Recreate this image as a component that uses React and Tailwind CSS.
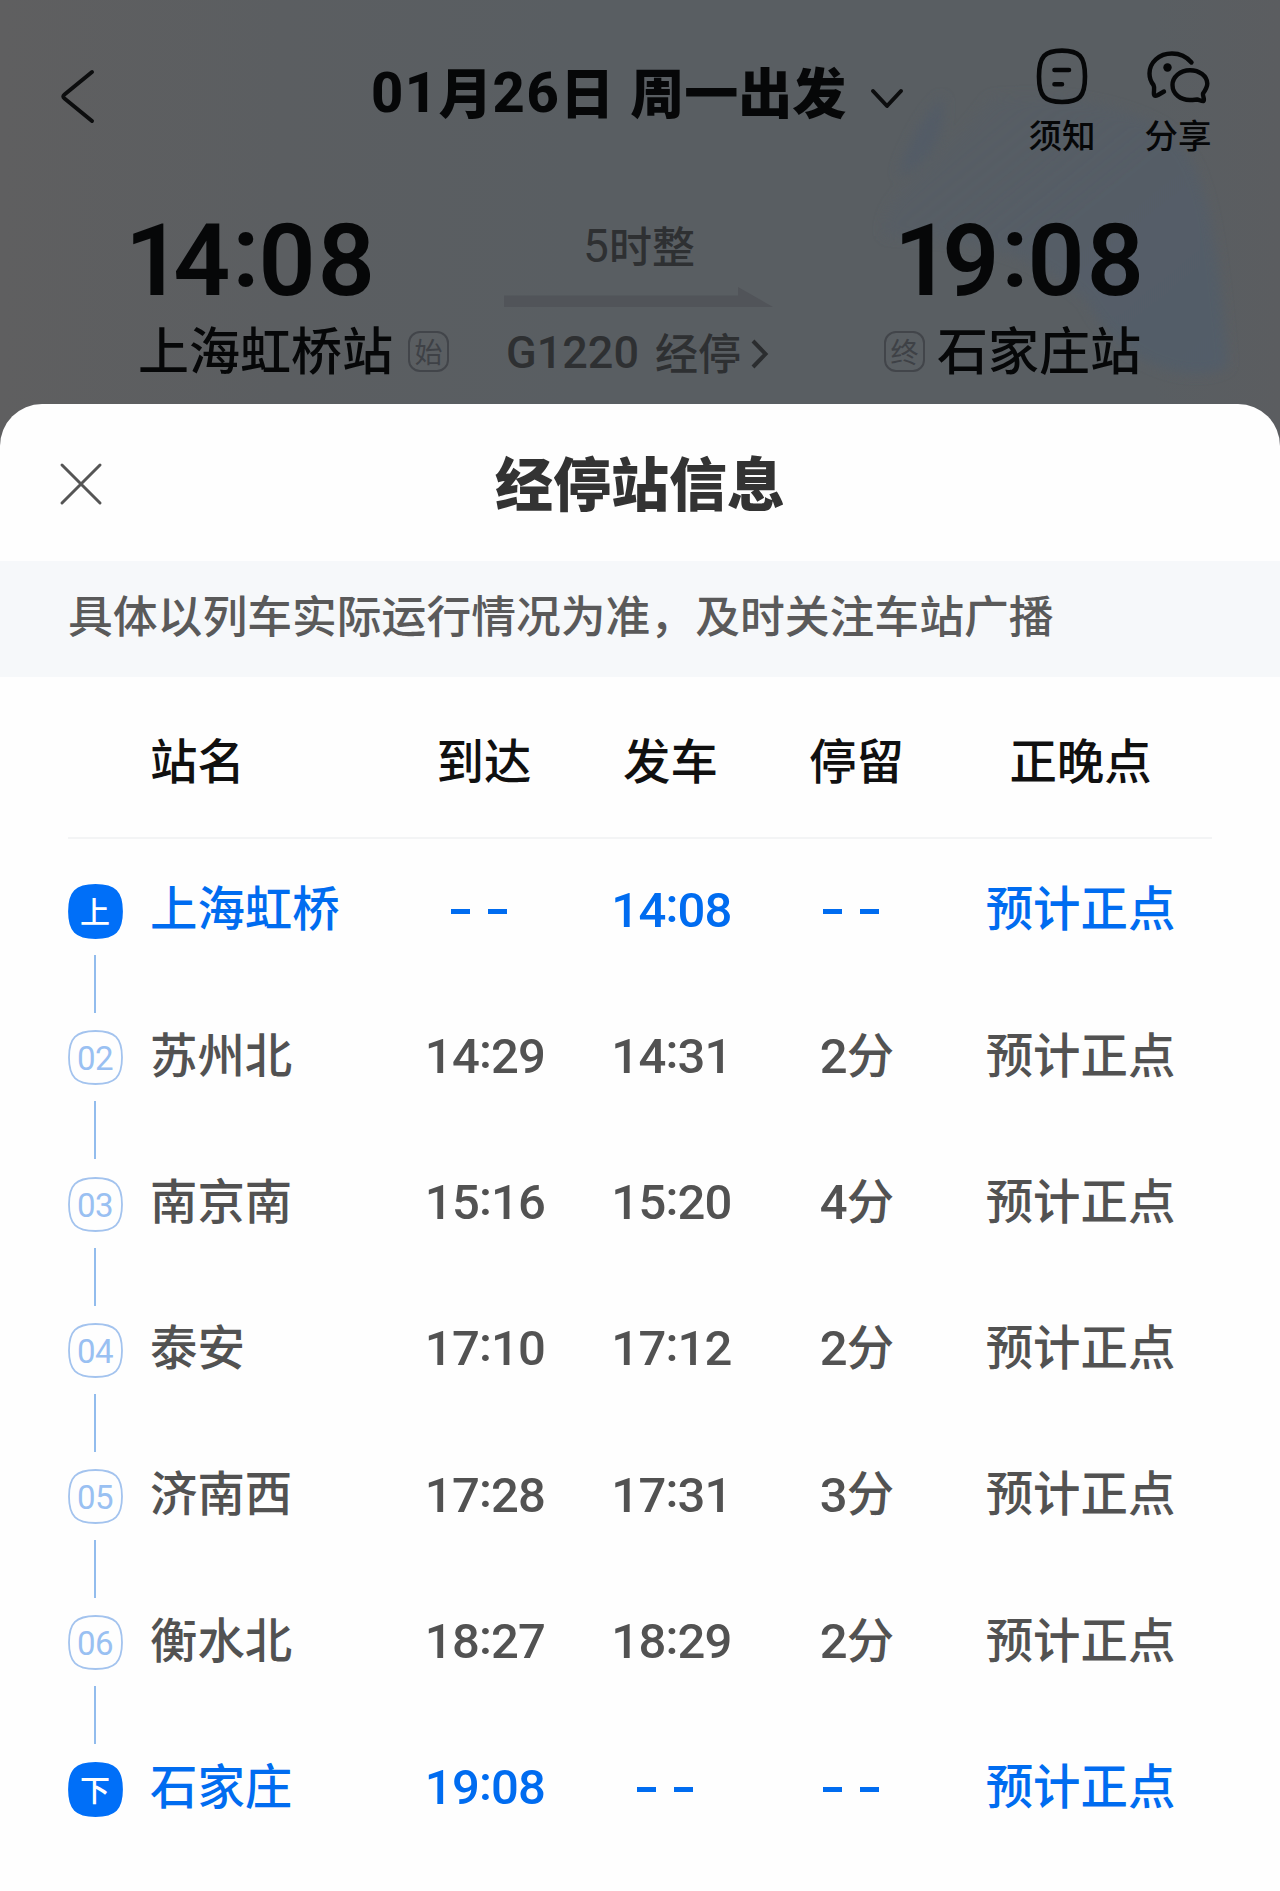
const stops = [
  { no: '上', name: '上海虹桥', arrive: null, depart: '14:08', stay: null, active: true },
  { no: '02', name: '苏州北', arrive: '14:29', depart: '14:31', stay: '2分' },
  { no: '03', name: '南京南', arrive: '15:16', depart: '15:20', stay: '4分' },
  { no: '04', name: '泰安', arrive: '17:10', depart: '17:12', stay: '2分' },
  { no: '05', name: '济南西', arrive: '17:28', depart: '17:31', stay: '3分' },
  { no: '06', name: '衡水北', arrive: '18:27', depart: '18:29', stay: '2分' },
  { no: '下', name: '石家庄', arrive: '19:08', depart: null, stay: null, active: true },
]

const COLS = 'grid grid-cols-[82px_241px_186px_187px_185px_263px]'
const DIGITS = "font-['Roboto','Noto_Sans_CJK_SC',sans-serif]"

function Backdrop() {
  return (
    <svg className="absolute inset-0 h-full w-full" viewBox="0 0 1280 450" preserveAspectRatio="none">
      <defs>
        <linearGradient id="sky" x1="0" y1="0" x2="1" y2="0">
          <stop offset="0" stopColor="#5f5f60" />
          <stop offset="0.22" stopColor="#5b5e61" />
          <stop offset="0.45" stopColor="#595e62" />
          <stop offset="0.9" stopColor="#595e62" />
          <stop offset="1" stopColor="#5b5d60" />
        </linearGradient>
        <linearGradient id="train" x1="0" y1="0" x2="1" y2="1">
          <stop offset="0" stopColor="#565d65" stopOpacity="0.3" />
          <stop offset="0.5" stopColor="#555d66" />
          <stop offset="1" stopColor="#525d69" />
        </linearGradient>
        <filter id="soft">
          <feGaussianBlur stdDeviation="6" />
        </filter>
      </defs>
      <rect width="1280" height="450" fill="url(#sky)" />
      <g filter="url(#soft)">
        <path d="M990 98 C1060 92 1120 104 1160 126 C1210 156 1216 240 1228 366 C1196 386 1120 368 1086 300 C1030 250 980 240 884 236 C880 190 930 180 990 98Z" fill="url(#train)" />
        <path d="M943 96 C946 130 936 164 898 176 C904 150 924 112 943 96Z" fill="#525c66" />
      </g>
    </svg>
  )
}

function NoticeIcon() {
  return (
    <svg width="52" height="57" viewBox="0 0 52 57" fill="none" stroke="#060708" strokeWidth="4.6" strokeLinecap="round">
      <path d="M26 2.6 C43 2.6 49 8 49 28.500 C49 49 43 54 26 54 C9 54 3 49 3 28.500 C3 8 9 2.600 26 2.600Z" />
      <path d="M18.500 22H33M18.500 36.200H26" />
    </svg>
  )
}

function ShareIcon() {
  return (
    <svg width="63" height="54" viewBox="0 0 63 54" fill="none" stroke="#060708" strokeWidth="4.4" strokeLinecap="round" strokeLinejoin="round">
      <path d="M44.500 11.500 C39 5 33 2.500 25 2.500 C12 2.500 2.500 11.500 2.500 22.500 C2.500 27 4 31 6.500 34 C8 37 6.500 40 7 43.500 C7.500 45.500 9 45 11 44 L17 40.500" />
      <circle cx="20.500" cy="16.500" r="4.200" fill="#060708" stroke="none" />
      <path d="M56 42.500 C58.500 39 60.300 36 60.300 32.500 C60 25 52.500 19.200 43 19.200 C33 19.200 25.500 26 25.500 34 C25.500 43 33.500 49.500 44 49 C46.500 49 48.500 48.500 50 48.500 C52.500 49 54.500 50.300 56.500 50 C58 48.500 55.500 45.500 56 42.500Z" />
    </svg>
  )
}

function TerminalTag({ children }) {
  return (
    <span className="flex h-[41px] w-[41px] items-center justify-center rounded-[12px] border-2 border-[#42454a] pb-[1px] text-[28px] leading-none font-normal text-[#3e4146]">
      {children}
    </span>
  )
}

function StopBadge({ no, active }) {
  return (
    <div className="relative flex h-[55px] w-[55px] items-center justify-center">
      <svg className="absolute inset-0" width="55" height="55" viewBox="0 0 55 55">
        <path
          d="M27.500 1 C47 1 54 8 54 27.500 C54 47 47 54 27.500 54 C8 54 1 47 1 27.500 C1 8 8 1 27.500 1Z"
          fill={active ? '#006ff8' : 'none'}
          stroke={active ? '#006ff8' : '#a3c3ee'}
          strokeWidth="1.800"
        />
      </svg>
      {active ? (
        <span className="relative pb-[3px] text-[30px] leading-none font-medium text-white">{no}</span>
      ) : (
        <span className={`${DIGITS} relative pt-[2px] text-[33px] leading-none tracking-[-0.500px] text-[#99c0f2]`}>{no}</span>
      )}
    </div>
  )
}

// colon is lifted so it sits at the middle of the digits
function Clock({ value }) {
  const [h, m] = value.split(':')
  return (
    <>
      {h}
      <span className="relative -top-[0.09em]">:</span>
      {m}
    </>
  )
}

function BigClock({ value }) {
  return (
    <div className={`${DIGITS} h-[108px] pt-[11px] text-[100px] leading-none font-semibold tracking-[2px]`}>
      <span className="tracking-[-9px]">{value[0]}</span>
      {value[1]}
      <span className="relative -top-[0.09em] tracking-[-1px]">:</span>
      {value.slice(3)}
    </div>
  )
}

function Time({ value }) {
  if (!value) {
    return (
      <span className="flex gap-[18px] pt-[6px] pr-[13px]">
        <i className="h-[5px] w-[19px] bg-current" />
        <i className="h-[5px] w-[19px] bg-current" />
      </span>
    )
  }
  return (
    <span className={`${DIGITS} pt-[3px] text-[49px] leading-none font-medium tracking-[-0.800px]`}>
      {value.includes(':') ? <Clock value={value} /> : value}
    </span>
  )
}

function StopRow({ stop, last }) {
  return (
    <div className={`${COLS} h-[146.300px] ${stop.active ? 'text-[#006cf0]' : 'text-[#525252]'}`}>
      <div className="flex w-[54px] flex-col items-center">
        <StopBadge no={stop.no} active={stop.active} />
        {!last && <div className="mt-[16px] h-[58px] w-[2px] bg-[#92bced]" />}
      </div>
      <div className="flex h-[49px] items-center pb-[5px] text-[47.400px] leading-none font-medium">{stop.name}</div>
      <div className="flex h-[49px] items-center justify-center pl-[2px]">
        <Time value={stop.arrive} />
      </div>
      <div className="flex h-[49px] items-center justify-center pl-[2px]">
        <Time value={stop.depart} />
      </div>
      <div className="flex h-[49px] items-center justify-center pl-[1px]">
        {stop.stay ? (
          <span className="flex items-center">
            <Time value={stop.stay[0]} />
            <span className="pb-[5px] text-[47.400px] leading-none font-medium">分</span>
          </span>
        ) : (
          <Time />
        )}
      </div>
      <div className="flex h-[49px] items-center justify-center pb-[5px] text-[47.400px] leading-none font-medium">预计正点</div>
    </div>
  )
}

export default function App() {
  return (
    <div className="relative h-[1891px] w-[1280px] overflow-hidden bg-[#5b5e61] font-['Noto_Sans_CJK_SC',sans-serif] whitespace-nowrap">
      <div className="relative h-[404px]">
        <div className="absolute inset-x-0 top-0 h-[450px]">
          <Backdrop />
        </div>

        {/* nav bar */}
        <div className="relative flex h-[200px] pt-[46px]">
          <svg className="mt-[22px] ml-[59px]" width="36" height="58" viewBox="0 0 36 58" fill="none" stroke="#0c0d0e" strokeWidth="4" strokeLinecap="round" strokeLinejoin="round">
            <path d="M33 4 L5.500 26.500 Q3 28.500 5.500 30.500 L33 53" />
          </svg>
          <div className="ml-[276px] flex h-[90px] w-[474px] items-center text-[54px] leading-none font-black text-[#060708]">
            <span className={`${DIGITS} pt-[3px] text-[56px] font-extrabold tracking-[1.500px]`}>01</span>月
            <span className={`${DIGITS} pt-[3px] text-[56px] font-extrabold tracking-[1.500px]`}>26</span>日
            <span className="ml-[16px]">周一出发</span>
          </div>
          <svg className="mt-[41px] ml-[24px]" width="36" height="24" viewBox="0 0 36 24" fill="none" stroke="#0c0d0e" strokeWidth="4" strokeLinecap="round" strokeLinejoin="round">
            <path d="M4 4 L18 19 L32 4" />
          </svg>
          <div className="ml-[123px] flex w-[68px] flex-col items-center pt-[2px] text-[33.500px] leading-none font-medium text-[#060708]">
            <NoticeIcon />
            <span className="mt-[12px]">须知</span>
          </div>
          <div className="ml-[48px] flex w-[68px] flex-col items-center pt-[2px] text-[33.500px] leading-none font-medium text-[#060708]">
            <div className="pt-[3px]">
              <ShareIcon />
            </div>
            <span className="mt-[12px]">分享</span>
          </div>
        </div>

        {/* trip summary */}
        <div className="relative flex text-[#060708]">
          <div className="ml-[125px] w-[325px]">
            <BigClock value="14:08" />
            <div className="mt-[15px] flex items-center pl-[13px]">
              <span className="text-[51px] leading-none font-medium">上海虹桥站</span>
              <span className="ml-[15px] pt-[6px]">
                <TerminalTag>始</TerminalTag>
              </span>
            </div>
          </div>
          <div className="ml-[54px] w-[270px] text-[#2e3032]">
            <div className="flex items-center justify-center pt-[20px] text-[43px] leading-none font-medium">
              <span className={`${DIGITS} pt-[3px] text-[46px] font-normal`}>5</span>时整
            </div>
            <svg className="mt-[17px]" width="270" height="22" viewBox="0 0 270 22">
              <path d="M0 9.500H234V1L269 21H0Z" fill="#515459" />
            </svg>
            <div className="mt-[20px] flex items-center pl-[2px] text-[43px] leading-none font-medium">
              <span className={`${DIGITS} pt-[2px] text-[45px] font-medium`}>G1220</span>
              <span className="ml-[16px]">经停</span>
              <svg className="mt-[4px] ml-[10px]" width="18" height="32" viewBox="0 0 18 32" fill="none" stroke="#2b2d2f" strokeWidth="4">
                <path d="M2 3 L14.500 16 L2 29" />
              </svg>
            </div>
          </div>
          <div className="ml-[110px] w-[270px]">
            <div className="pl-[10px]">
              <BigClock value="19:08" />
            </div>
            <div className="mt-[15px] flex items-center">
              <span className="pt-[6px]">
                <TerminalTag>终</TerminalTag>
              </span>
              <span className="ml-[12px] text-[51px] leading-none font-medium">石家庄站</span>
            </div>
          </div>
        </div>
      </div>

      {/* bottom sheet */}
      <div className="relative h-[1487px] rounded-t-[42px] bg-[#fefefe]">
        <div className="flex h-[157px] items-start">
          <svg className="mt-[58px] ml-[59px]" width="44" height="44" viewBox="0 0 44 44" fill="none" stroke="#555" strokeWidth="3" strokeLinecap="round">
            <path d="M3 3 L41 41 M41 3 L3 41" />
          </svg>
          <h1 className="mt-[48px] ml-[392px] text-[58px] leading-none font-black text-[#333]">经停站信息</h1>
        </div>
        <div className="flex h-[116px] items-center bg-[#f6f8fa] pb-[9px] pl-[68px] text-[44.800px] leading-none font-medium text-[#5a5a5a]">
          具体以列车实际运行情况为准，及时关注车站广播
        </div>

        <div className="mr-[68px] ml-[68px]">
          <div className={`${COLS} h-[162px] items-center border-b-2 border-[#f3f4f5] pt-[3px] text-center text-[47.400px] leading-none font-medium text-[#101010]`}>
            <span />
            <span className="text-left">站名</span>
            <span>到达</span>
            <span>发车</span>
            <span>停留</span>
            <span>正晚点</span>
          </div>
          <div className="pt-[45px]">
            {stops.map((stop, i) => (
              <StopRow key={stop.no} stop={stop} last={i === stops.length - 1} />
            ))}
          </div>
        </div>
      </div>
    </div>
  )
}
